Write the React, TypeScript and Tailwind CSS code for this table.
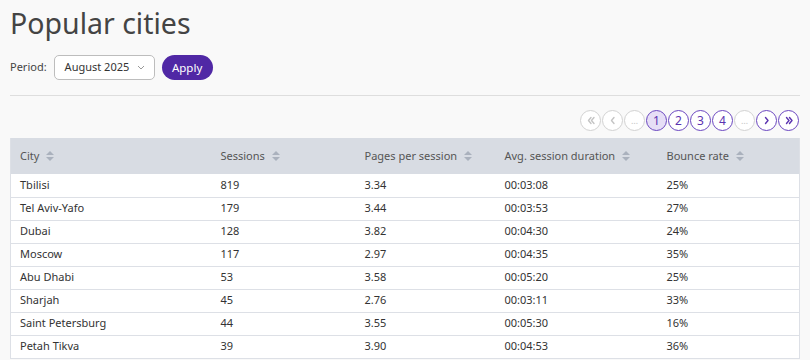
import React from "react";

interface CityRow {
    city: string;
    sessions: number;
    pages: string;
    duration: string;
    bounce: string;
}

const rows: CityRow[] = [
    { city: "Tbilisi", sessions: 819, pages: "3.34", duration: "00:03:08", bounce: "25%" },
    { city: "Tel Aviv-Yafo", sessions: 179, pages: "3.44", duration: "00:03:53", bounce: "27%" },
    { city: "Dubai", sessions: 128, pages: "3.82", duration: "00:04:30", bounce: "24%" },
    { city: "Moscow", sessions: 117, pages: "2.97", duration: "00:04:35", bounce: "35%" },
    { city: "Abu Dhabi", sessions: 53, pages: "3.58", duration: "00:05:20", bounce: "25%" },
    { city: "Sharjah", sessions: 45, pages: "2.76", duration: "00:03:11", bounce: "33%" },
    { city: "Saint Petersburg", sessions: 44, pages: "3.55", duration: "00:05:30", bounce: "16%" },
    { city: "Petah Tikva", sessions: 39, pages: "3.90", duration: "00:04:53", bounce: "36%" },
];

const columns = [
    { label: "City", width: "w-[201px]" },
    { label: "Sessions", width: "w-[144px]" },
    { label: "Pages per session", width: "w-[140px]" },
    { label: "Avg. session duration", width: "w-[162px]" },
    { label: "Bounce rate", width: "" },
];

const SortIcon = () => (
    <svg width="10" height="12" viewBox="0 0 10 12" className="ml-[6px] inline-block">
        <path d="M5 1 L9 5 H1 Z" fill="#aab1bd" />
        <path d="M5 11 L9 7 H1 Z" fill="#aab1bd" />
    </svg>
);

// chevrons for the pager, drawn so they match the reference weight
const Chevron = ({ dir, double }: { dir: "left" | "right"; double?: boolean }) => {
    const one = dir === "left" ? "M5 1.5 L2.5 4.5 L5 7.5" : "M2.5 1.5 L5 4.5 L2.5 7.5";
    const two = dir === "left" ? "M8 1.5 L5.5 4.5 L8 7.5" : "M5.5 1.5 L8 4.5 L5.5 7.5";
    return (
        <svg width={double ? 10 : 7} height="9" viewBox={double ? "0 0 10 9" : "0 0 7 9"}>
            <path d={one} stroke="currentColor" strokeWidth="1.4" fill="none" strokeLinecap="round" strokeLinejoin="round" />
            {double && <path d={two} stroke="currentColor" strokeWidth="1.4" fill="none" strokeLinecap="round" strokeLinejoin="round" />}
        </svg>
    );
};

const PageButton = ({ children, active, current }: { children: React.ReactNode; active?: boolean; current?: boolean }) => {
    let cls = "border-[#d2d2d2] text-[#c4c4c4] bg-white";
    if (active) cls = "border-[#6a46c0] text-[#5b33b0] bg-white";
    if (current) cls = "border-[#6a46c0] text-[#5b33b0] bg-[#e6def6]";
    return (
        <span className={`flex h-[21px] w-[21px] items-center justify-center rounded-full border-[1.5px] text-[12px] leading-none ${cls}`}>
            {children}
        </span>
    );
};

export default function App() {
    return (
        <div className="h-[360px] overflow-hidden bg-[#f9f9f9] px-[10px] text-[#444]" style={{ fontFamily: '"Noto Sans", sans-serif' }}>
            <h1 className="pt-[3px] text-[28.5px] font-normal leading-[40px] text-[#444]">Popular cities</h1>
            <div className="mt-[12px] flex items-center">
                <span className="text-[11px] text-[#444]">Period:</span>
                <div className="ml-[7px] flex h-[25px] w-[101px] items-center rounded-[5px] border border-[#bdbdbd] bg-white pl-[10px] text-[11px] text-[#333]">
                    August 2025
                    <svg width="8" height="5" viewBox="0 0 8 5" className="ml-[8px]">
                        <path d="M1 1 L4 4 L7 1" stroke="#999" strokeWidth="1" fill="none" />
                    </svg>
                </div>
                <button className="ml-[7px] h-[25px] w-[51px] rounded-full bg-[#5028a5] text-[11.5px] text-white">Apply</button>
            </div>
            <div className="mt-[15px] border-t border-[#dedede]" />
            <div className="mt-[14px] flex justify-end gap-[1px] pr-[1px]">
                <PageButton><Chevron dir="left" double /></PageButton>
                <PageButton><Chevron dir="left" /></PageButton>
                <PageButton><span className="text-[9px]">…</span></PageButton>
                <PageButton current>1</PageButton>
                <PageButton active>2</PageButton>
                <PageButton active>3</PageButton>
                <PageButton active>4</PageButton>
                <PageButton><span className="text-[9px]">…</span></PageButton>
                <PageButton active><Chevron dir="right" /></PageButton>
                <PageButton active><Chevron dir="right" double /></PageButton>
            </div>
            <table className="mt-[7px] w-full border-collapse border-x border-[#dde0e6] bg-white text-left text-[11px] text-[#333]">
                <thead>
                    <tr className="h-[36px] bg-[#d8dce3]">
                        {columns.map(col => (
                            <th key={col.label} className={`${col.width} pl-[9px] font-normal text-[#555]`}>
                                <span className="inline-flex items-center">
                                    {col.label}
                                    <SortIcon />
                                </span>
                            </th>
                        ))}
                    </tr>
                </thead>
                <tbody>
                    {rows.map(row => (
                        <tr key={row.city} className="h-[23px] border-b border-[#dde0e6]">
                            <td className="pl-[9px]">{row.city}</td>
                            <td className="pl-[9px]">{row.sessions}</td>
                            <td className="pl-[9px]">{row.pages}</td>
                            <td className="pl-[9px]">{row.duration}</td>
                            <td className="pl-[9px]">{row.bounce}</td>
                        </tr>
                    ))}
                </tbody>
            </table>
        </div>
    );
}
